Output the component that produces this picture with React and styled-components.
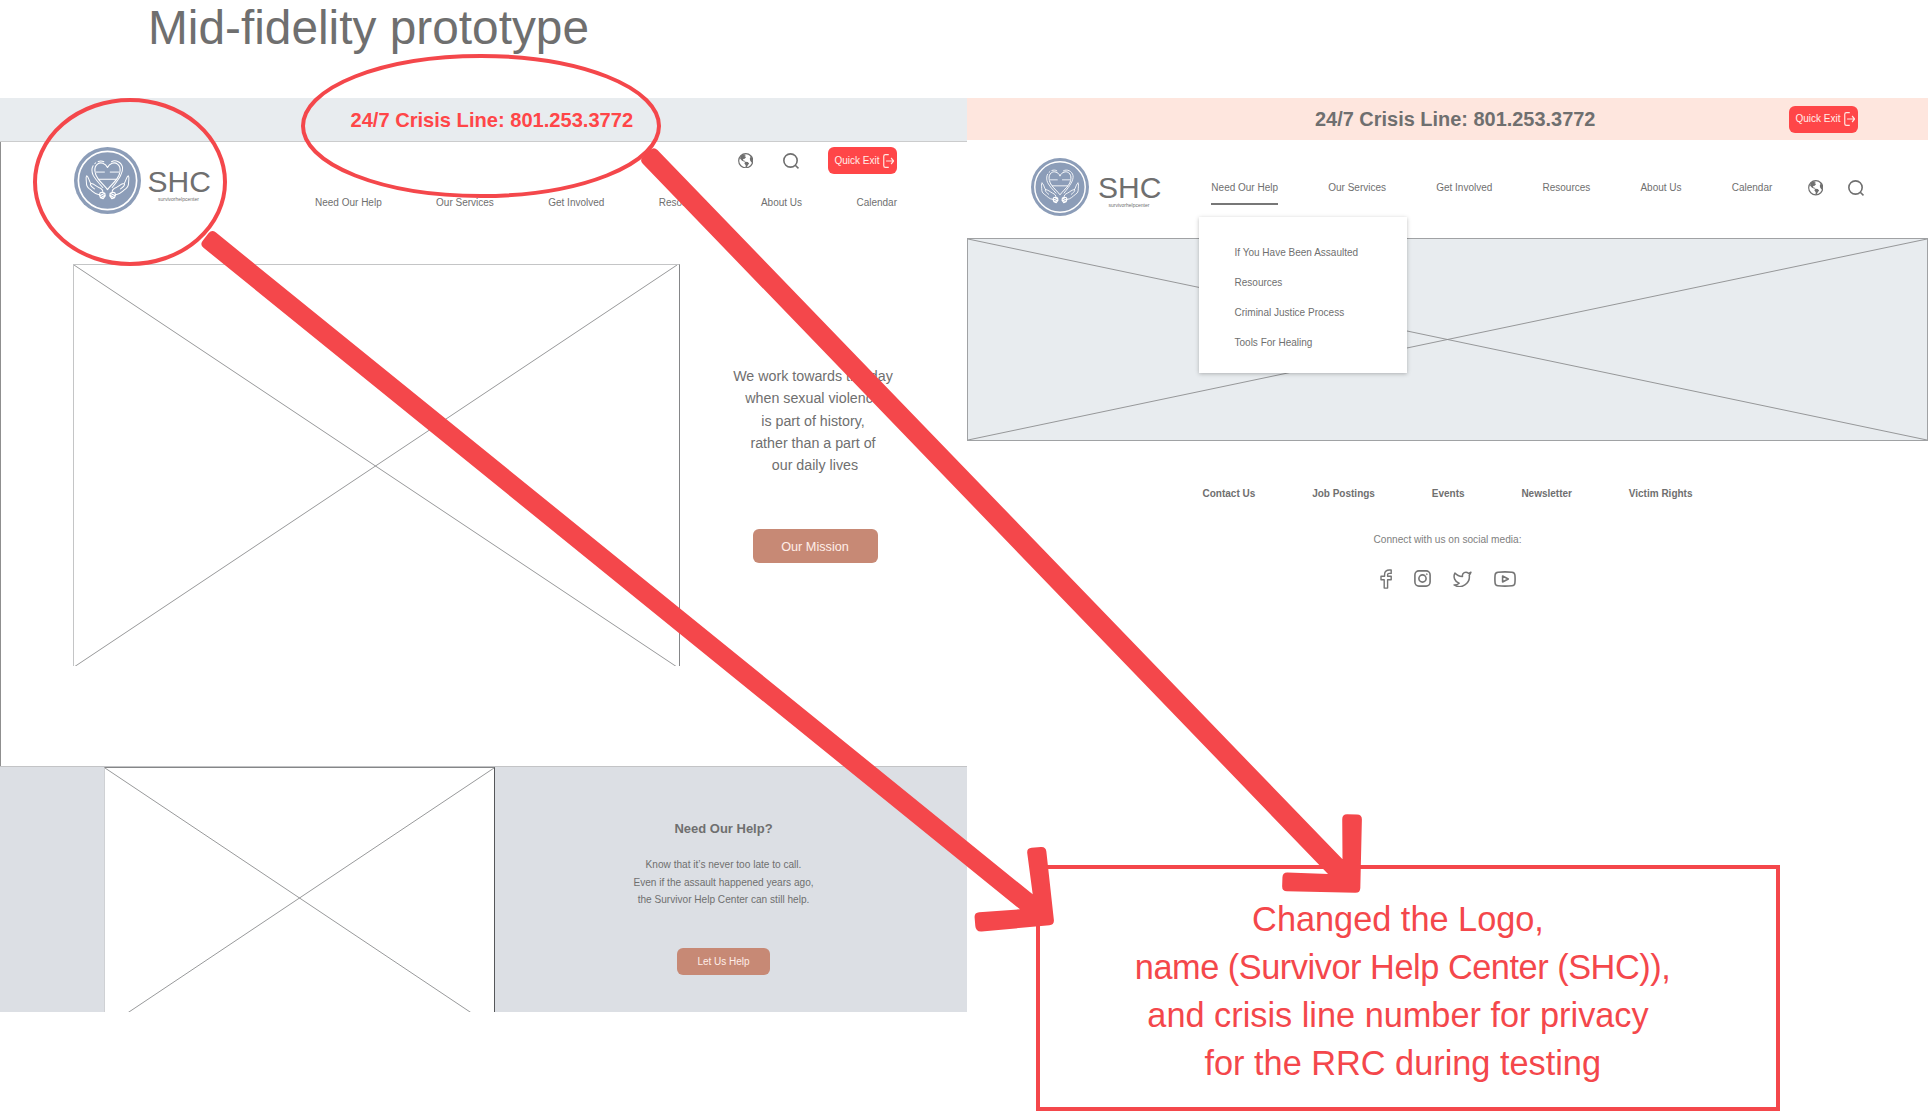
import React from 'react';
import styled, { createGlobalStyle } from 'styled-components';

const colors = {
  red: '#f4474b',
  alert: '#ff4648',
  ink: '#6f6f6f',
  blue: '#8c9db8',
  clay: '#c78975',
  mist: '#e8ecef',
  fog: '#dcdfe4',
  peach: '#fee6de',
};

const GlobalStyle = createGlobalStyle`
  *, *::before, *::after { box-sizing: border-box; }
  body {
    margin: 0;
    background: #fff;
    font-family: "Liberation Sans", Arial, sans-serif;
    color: ${colors.ink};
  }
`;

const Board = styled.div`
  position: relative;
  width: 1928px;
  height: 1111px;
  overflow: hidden;
  background: #fff;
`;

const BoardHeader = styled.header`
  height: 98px;
  padding: 4px 0 0 148px;
`;

const BoardTitle = styled.h1`
  margin: 0;
  font-size: 47.8px;
  line-height: 48px;
  font-weight: 400;
  white-space: nowrap;
`;

const Screens = styled.main`
  display: flex;
  align-items: flex-start;
`;

const Screen = styled.section`
  flex: none;
  width: ${(p) => p.$width}px;
`;

const CrisisBar = styled.div`
  display: flex;
  align-items: center;
  height: ${(p) => p.$height}px;
  padding: 0 70px 0 ${(p) => p.$indent}px;
  background: ${(p) => p.$fill};
  border-bottom: ${(p) => (p.$ruled ? '1px solid #cbcccd' : '0')};
`;

const CrisisLine = styled.strong`
  flex: 1;
  font-size: ${(p) => p.$size}px;
  line-height: 24px;
  font-weight: 700;
  color: ${(p) => p.$color};
  white-space: nowrap;
`;

const ExitButton = styled.button`
  display: flex;
  align-items: center;
  gap: 3px;
  width: 69px;
  height: 27px;
  padding: 0 0 0 6.500px;
  border: 0;
  border-radius: 6px;
  background: ${colors.alert};
  color: #ffeee9;
  font: 400 10px/14px "Liberation Sans", Arial, sans-serif;
  white-space: nowrap;
`;

const Framed = styled.div`
  height: 624px;
  border-left: 1px solid #8f8f8f;
`;

const OldHeader = styled.div`
  display: flex;
  justify-content: space-between;
  height: 122px;
  padding: 5px 70px 0 73px;
`;

const OldMenus = styled.div`
  display: flex;
  flex-direction: column;
  align-items: flex-end;
  width: 582px;
`;

const Tools = styled.div`
  display: flex;
  align-items: center;
  gap: ${(p) => p.$gap}px;
  margin-left: ${(p) => p.$offset || 0}px;
`;

const Nav = styled.nav`
  display: flex;
  justify-content: space-between;
  width: ${(p) => p.$width}px;
  margin-top: ${(p) => p.$top || 0}px;
`;

const NavItem = styled.a`
  position: relative;
  font-size: 10px;
  line-height: 14px;
  font-weight: ${(p) => (p.$bold ? 700 : 400)};
  white-space: nowrap;
  &::after {
    content: '';
    display: ${(p) => (p.$active ? 'block' : 'none')};
    position: absolute;
    left: 0;
    right: 0;
    top: 22px;
    height: 2px;
    background: #777;
  }
`;

const Brand = styled.div`
  display: flex;
  align-items: flex-start;
  gap: ${(p) => p.$gap}px;
`;

const BrandText = styled.div`
  padding-top: ${(p) => p.$drop}px;
`;

const BrandName = styled.div`
  font-size: 30px;
  line-height: 22px;
`;

const BrandTag = styled.div`
  margin: 2.5px 0 0 10.5px;
  font-size: 5px;
  line-height: 6px;
`;

const OldHero = styled.div`
  display: flex;
  padding-left: 72px;
`;

const Placeholder = styled.div`
  position: relative;
  width: ${(p) => p.$width}px;
  height: ${(p) => p.$height}px;
  background: ${(p) => p.$fill || '#fff'};
  border-style: solid;
  border-width: ${(p) => p.$edges};
  border-color: ${(p) => p.$edgeColors};
  overflow: hidden;
`;

const CrossSvg = styled.svg`
  display: block;
  position: absolute;
  inset: 0;
`;

const HeroCopy = styled.div`
  display: flex;
  flex-direction: column;
  align-items: center;
  width: 266px;
  padding-top: 101px;
`;

const Statement = styled.p`
  margin: 0 0 53px;
  font-size: 14.25px;
  line-height: 22.25px;
  text-align: center;
  white-space: pre;
`;

const ClayButton = styled.button`
  width: ${(p) => p.$width}px;
  height: ${(p) => p.$height}px;
  margin-left: ${(p) => p.$nudge || 0}px;
  padding: 1px 0 0;
  border: 0;
  border-radius: 6px;
  background: ${colors.clay};
  color: #ffeee8;
  font: 400 ${(p) => p.$size}px/16px "Liberation Sans", Arial, sans-serif;
`;

const HelpBand = styled.div`
  display: flex;
  height: 246px;
  padding-left: 104px;
  background: ${colors.fog};
  border-top: 1px solid #c3c4c6;
`;

const HelpCopy = styled.div`
  display: flex;
  flex-direction: column;
  align-items: center;
  width: 457px;
  padding-top: 54px;
`;

const HelpTitle = styled.h2`
  margin: 0 0 19px;
  font-size: 13px;
  line-height: 16px;
  font-weight: 700;
`;

const HelpText = styled.p`
  margin: 0 0 39px;
  font-size: 10.1px;
  line-height: 17.7px;
  text-align: center;
  white-space: pre;
`;

const NewHeader = styled.div`
  position: relative;
  display: flex;
  height: 98px;
  padding: 18px 0 0 64px;
`;

const NewMenus = styled.div`
  display: flex;
  align-items: center;
  height: 59px;
  margin-left: 50px;
`;

const Dropdown = styled.ul`
  position: absolute;
  z-index: 1;
  left: 232px;
  top: 77px;
  width: 208px;
  height: 156px;
  margin: 0;
  padding: 21px 0 0 35.500px;
  list-style: none;
  background: #fff;
  box-shadow: 0 1px 4px rgba(0, 0, 0, 0.25);
`;

const DropdownItem = styled.li`
  font-size: 10.03px;
  line-height: 30px;
`;

const Footer = styled.footer`
  display: flex;
  flex-direction: column;
  align-items: center;
  padding-top: 46px;
`;

const Connect = styled.p`
  margin: 32px 0 22px;
  font-size: 10.15px;
  line-height: 14px;
  color: #808080;
`;

const Socials = styled.div`
  display: flex;
  align-items: center;
  gap: 22px;
  height: 20px;
`;

const Note = styled.aside`
  width: 744px;
  height: 246px;
  margin: 276px 0 0 69px;
  padding: 26px 20px 0 0;
  border: 4px solid ${colors.red};
  color: ${colors.red};
`;

const NoteLine = styled.div`
  font-size: 34.3px;
  line-height: 48.1px;
  letter-spacing: ${(p) => p.$tracking || 0}px;
  text-align: center;
  white-space: pre;
`;

const Markup = styled.svg`
  position: absolute;
  inset: 0;
  pointer-events: none;
`;

/* Builds a closed path whose corners are eased by the third value of each point. */
function roundedPath(points) {
  const n = points.length;
  const step = (from, to, r) => {
    const len = Math.hypot(to[0] - from[0], to[1] - from[1]);
    return `${from[0] + ((to[0] - from[0]) * r) / len} ${from[1] + ((to[1] - from[1]) * r) / len}`;
  };
  return (
    points
      .map((p, i) => {
        const prev = points[(i + n - 1) % n];
        const next = points[(i + 1) % n];
        return `${i ? 'L' : 'M'}${step(p, prev, p[2])} Q${p[0]} ${p[1]} ${step(p, next, p[2])}`;
      })
      .join(' ') + ' Z'
  );
}

const logoArrow = roundedPath([
  [211.8, 229.2, 5], [1032.7, 894.3, 0], [1026.6, 848.3, 5], [1045.8, 846.6, 5],
  [1054.4, 924.8, 5], [975.8, 932, 6], [974.2, 912.6, 5], [1020, 909.3, 0], [199.6, 244.6, 5],
]);

const crisisArrow = roundedPath([
  [654, 146.4, 5], [1342.5, 859.3, 0], [1342.2, 814.3, 5], [1362, 814.5, 5],
  [1360.2, 892.9, 5], [1282, 891.1, 5], [1282.6, 872.2, 5], [1328, 874, 0], [639.3, 160.2, 5],
]);

function Cross({ width, height }) {
  return (
    <CrossSvg width={width} height={height} stroke="#8c8d8e" strokeWidth="0.9">
      <path d={`M0 0L${width} ${height}M${width} 0L0 ${height}`} />
    </CrossSvg>
  );
}

function Emblem({ size }) {
  return (
    <svg width={size} height={size} viewBox="42 36 200 200" fill="none" stroke="#fff" strokeWidth="3" strokeLinecap="round" strokeLinejoin="round">
      <circle cx="142" cy="136" r="100" fill={colors.blue} stroke="none" />
      <circle cx="142" cy="136" r="87" strokeWidth="5" />
      <path strokeWidth="3.4" d="M142 97C136 84 121 80 112 87C100 96 103 117 114 131C121 141 134 152 142 163C150 152 163 141 170 131C181 117 184 96 172 87C163 80 148 84 142 97Z" />
      <path d="M99 92C95 99 95 111 99 120C105 132 118 146 128 157M104 86L107 83M114 79C120 77 126 77 131 80M154 80C166 73 184 81 187 97C189 113 178 129 156 157" />
      <path strokeWidth="5" stroke="#c9d2e0" strokeLinecap="butt" d="M106 111H134M149 111H178" />
      <path d="M116 132H168" />
      <path d="M80 122C76 125 79 133 79 142C79 152 81 156 88 161C99 168 103 178 119 179M80 122C86 125 87 138 92 145M92 145C88 149 96 156 103 161M92 145C100 144 109 154 116 157C124 160 129 165 128 172" />
      <path d="M204 122C208 125 205 133 205 142C205 152 203 156 196 161C185 168 181 178 165 179M204 122C198 125 197 138 192 145M192 145C196 149 188 156 181 161M192 145C184 144 175 154 168 157C160 160 155 165 156 172" />
      <path strokeWidth="3.6" d="M120 173L126 171L134 174L135 182L129 190L121 187L118 179ZM121 181L132 175M123 187L134 180M164 173L158 171L150 174L149 182L155 190L163 187L166 179ZM163 181L152 175M161 187L150 180" />
    </svg>
  );
}

function GlobeIcon() {
  return (
    <svg width="15.5" height="15.5" viewBox="0 0 46 46" fill={colors.ink}>
      <circle cx="23" cy="23" r="21" fill="none" stroke={colors.ink} strokeWidth="3.4" />
      <path d="M8 9L17 4L24 6L19 9L24 12L20 17L15 18L16 22L22 24L19 26L12 23L6 16Z" />
      <path d="M21 26L29 27L33 31L29 36L26 43L22 43L23 36L19 31Z" />
      <path d="M36 8L42 14L44 23L42 30L39 27L36 22L35 16L37 12Z" />
    </svg>
  );
}

function SearchIcon() {
  return (
    <svg width="16" height="16" viewBox="0 0 48 48" fill="none" stroke={colors.ink} strokeWidth="4.8">
      <circle cx="22.5" cy="22.5" r="20" />
      <path d="M36 36L46.500 46" />
    </svg>
  );
}

function ExitIcon() {
  return (
    <svg width="11.500" height="14" viewBox="0 0 34 42" fill="none" stroke="#ffe9e3" strokeWidth="3.500">
      <path d="M17 2H7Q2 2 2 7V35Q2 40 7 40H17M9 21H32M24 12L32 21L24 30" />
    </svg>
  );
}

function Brandmark({ size, gap, drop }) {
  return (
    <Brand $gap={gap}>
      <Emblem size={size} />
      <BrandText $drop={drop}>
        <BrandName>SHC</BrandName>
        <BrandTag>survivorhelpcenter</BrandTag>
      </BrandText>
    </Brand>
  );
}

function QuickExit() {
  return (
    <ExitButton>
      Quick Exit
      <ExitIcon />
    </ExitButton>
  );
}

const sections = ['Need Our Help', 'Our Services', 'Get Involved', 'Resources', 'About Us', 'Calendar'];
const helpTopics = ['If You Have Been Assaulted', 'Resources', 'Criminal Justice Process', 'Tools For Healing'];
const footerLinks = ['Contact Us', 'Job Postings', 'Events', 'Newsletter', 'Victim Rights'];

function OldScreen() {
  return (
    <Screen $width={967}>
      <CrisisBar $height={44} $indent={350.500} $fill={colors.mist} $ruled>
        <CrisisLine $size={20.1} $color={colors.alert}>24/7 Crisis Line: 801.253.3772</CrisisLine>
      </CrisisBar>
      <Framed>
        <OldHeader>
          <Brandmark size={67} gap={6.500} drop={24} />
          <OldMenus>
            <Tools $gap={29.500}>
              <GlobeIcon />
              <SearchIcon />
              <QuickExit />
            </Tools>
            <Nav $width={582} $top={22}>
              {sections.map((s) => <NavItem key={s}>{s}</NavItem>)}
            </Nav>
          </OldMenus>
        </OldHeader>
        <OldHero>
          <Placeholder $width={607} $height={402} $edges="1px 1px 0 1px" $edgeColors="#c4c5c6 #858688 transparent #c4c5c6">
            <Cross width={603} height={402} />
          </Placeholder>
          <HeroCopy>
            <Statement>{'We work towards the day\nwhen sexual violence\nis part of history,\nrather than a part of\n our daily lives'}</Statement>
            <ClayButton $width={125} $height={33.5} $size={12.7} $nudge={4}>Our Mission</ClayButton>
          </HeroCopy>
        </OldHero>
      </Framed>
      <HelpBand>
        <Placeholder $width={391} $height={245} $edges="1px 1px 0 1px" $edgeColors="#858688 #55575a transparent #cfd1d4">
          <Cross width={389} height={260} />
        </Placeholder>
        <HelpCopy>
          <HelpTitle>Need Our Help?</HelpTitle>
          <HelpText>{'Know that it’s never too late to call.\nEven if the assault happened years ago,\nthe Survivor Help Center can still help.'}</HelpText>
          <ClayButton $width={93} $height={27} $size={10}>Let Us Help</ClayButton>
        </HelpCopy>
      </HelpBand>
    </Screen>
  );
}

function FacebookIcon() {
  return (
    <svg width="12" height="20" viewBox="0 0 12 20" fill="none" stroke="#757575" strokeWidth="1.4" strokeLinejoin="round">
      <path d="M11.2 1H9.400C6.500 1 4.600 2.600 4.600 5.200V7.200H1V10.700H4.200V19.100H7.600V10.700H11.200V7.200H7.600V5.700C7.600 4.800 8.200 4.400 9 4.400H11.200Z" />
    </svg>
  );
}

function InstagramIcon() {
  return (
    <svg width="17" height="17" viewBox="0 0 17 17" fill="none" stroke="#757575" strokeWidth="1.6">
      <rect x="0.900" y="0.900" width="15.200" height="15.200" rx="4" />
      <circle cx="8.500" cy="8.500" r="3.600" />
      <circle cx="12.800" cy="4.200" r="0.500" strokeWidth="0.900" />
    </svg>
  );
}

function TwitterIcon() {
  return (
    <svg width="19" height="16" viewBox="1 2.500 22 19" fill="none" stroke="#757575" strokeWidth="1.800" strokeLinejoin="round">
      <path d="M22 4s-.7 2.100-2 3.400c1.600 10-9.400 17.300-18 11.600 2.200.1 4.400-.6 6-2C3 15.500.5 9.600 3 5c2.200 2.600 5.600 4.100 9 4-.9-4.200 4-6.600 7-3.800 1.100 0 3-1.200 3-1.200z" />
    </svg>
  );
}

function YoutubeIcon() {
  return (
    <svg width="22" height="16" viewBox="0 0 22 16" fill="none" stroke="#757575" strokeWidth="1.600" strokeLinejoin="round">
      <path d="M4 1.200Q11 .5 18 1.200Q20.700 1.500 20.900 4Q21.300 8 20.900 12Q20.700 14.500 18 14.800Q11 15.500 4 14.800Q1.300 14.500 1.100 12Q.7 8 1.100 4Q1.300 1.500 4 1.200Z" />
      <path d="M8.600 5L14.300 8L8.600 11Z" />
    </svg>
  );
}

function NewScreen() {
  return (
    <Screen $width={961}>
      <CrisisBar $height={42.400} $indent={348} $fill={colors.peach}>
        <CrisisLine $size={19.950} $color={colors.ink}>24/7 Crisis Line: 801.253.3772</CrisisLine>
        <QuickExit />
      </CrisisBar>
      <NewHeader>
        <Brandmark size={58} gap={9} drop={19} />
        <NewMenus>
          <Nav $width={561}>
            {sections.map((s, i) => <NavItem key={s} $active={i === 0}>{s}</NavItem>)}
          </Nav>
          <Tools $gap={25} $offset={35.500}>
            <GlobeIcon />
            <SearchIcon />
          </Tools>
        </NewMenus>
        <Dropdown>
          {helpTopics.map((t) => <DropdownItem key={t}>{t}</DropdownItem>)}
        </Dropdown>
      </NewHeader>
      <Placeholder $width={961} $height={202.600} $fill={colors.mist} $edges="1px" $edgeColors="#a0a2a4">
        <Cross width={959} height={201} />
      </Placeholder>
      <Footer>
        <Nav $width={490}>
          {footerLinks.map((l) => <NavItem key={l} $bold>{l}</NavItem>)}
        </Nav>
        <Connect>Connect with us on social media:</Connect>
        <Socials>
          <FacebookIcon />
          <InstagramIcon />
          <TwitterIcon />
          <YoutubeIcon />
        </Socials>
      </Footer>
      <Note>
        <NoteLine>Changed the Logo,</NoteLine>
        <NoteLine $tracking={-0.450}> name (Survivor Help Center (SHC)),</NoteLine>
        <NoteLine>and crisis line number for privacy</NoteLine>
        <NoteLine> for the RRC during testing</NoteLine>
      </Note>
    </Screen>
  );
}

export default function App() {
  return (
    <Board>
      <GlobalStyle />
      <BoardHeader>
        <BoardTitle>Mid-fidelity prototype</BoardTitle>
      </BoardHeader>
      <Screens>
        <OldScreen />
        <NewScreen />
      </Screens>
      <Markup width="1928" height="1111" fill="none">
        <ellipse cx="130" cy="182" rx="95" ry="82" stroke={colors.red} strokeWidth="4" />
        <ellipse cx="481" cy="126" rx="178" ry="70" stroke={colors.red} strokeWidth="4" />
        <path d={logoArrow} fill={colors.red} />
        <path d={crisisArrow} fill={colors.red} />
      </Markup>
    </Board>
  );
}
